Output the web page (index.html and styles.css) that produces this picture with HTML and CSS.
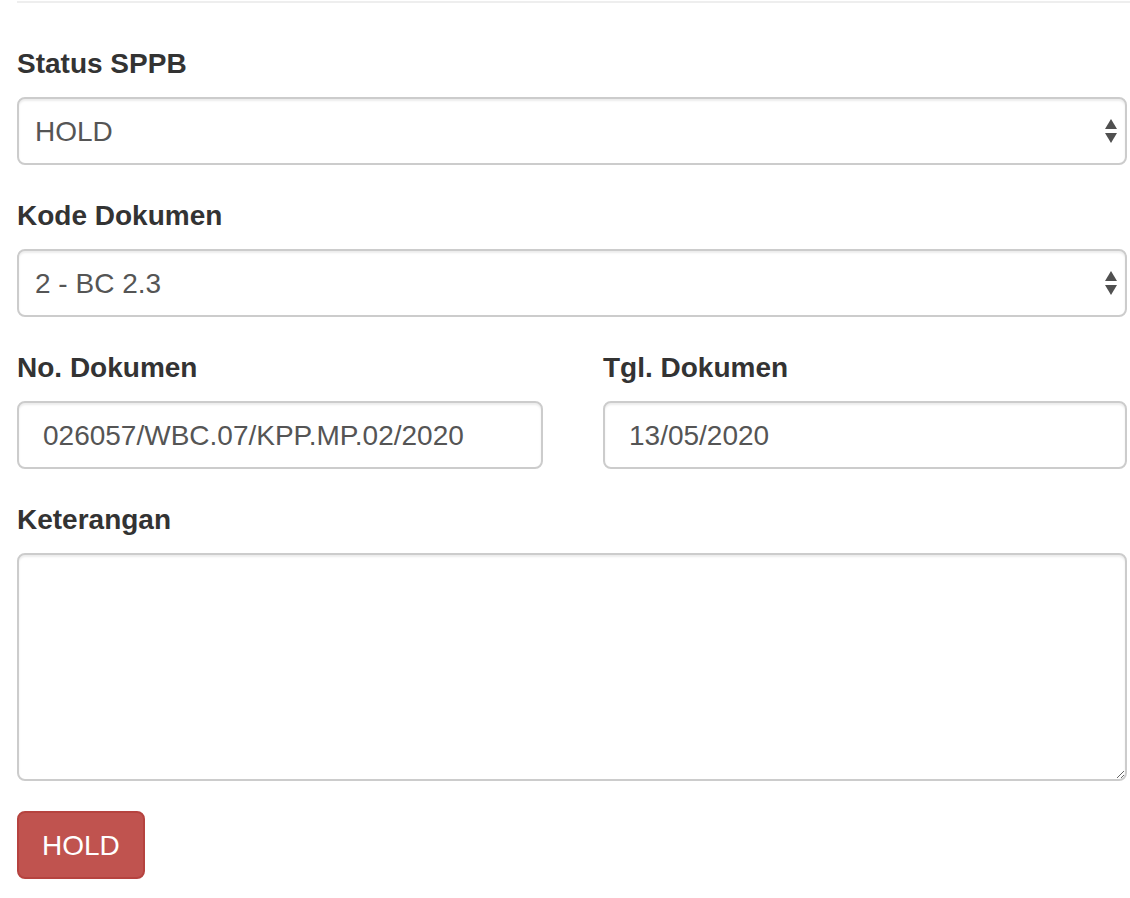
FILE: index.html
```html
<!DOCTYPE html>
<html lang="id">
<head>
<meta charset="utf-8">
<title>Status SPPB</title>
<link rel="stylesheet" href="styles.css">
</head>
<body>
<div class="page">
  <hr class="divider">
  <form class="form">
    <div class="form-group">
      <label class="label" for="status">Status SPPB</label>
      <div class="select-wrap">
        <select id="status" class="control select">
          <option>HOLD</option>
        </select>
        <svg class="select-arrows" width="12" height="24" viewBox="0 0 12 24" aria-hidden="true">
          <polygon points="6,0 12,10 0,10" fill="#505050"/>
          <polygon points="0,14 12,14 6,24" fill="#505050"/>
        </svg>
      </div>
    </div>
    <div class="form-group">
      <label class="label" for="kode">Kode Dokumen</label>
      <div class="select-wrap">
        <select id="kode" class="control select">
          <option>2 - BC 2.3</option>
        </select>
        <svg class="select-arrows" width="12" height="24" viewBox="0 0 12 24" aria-hidden="true">
          <polygon points="6,0 12,10 0,10" fill="#505050"/>
          <polygon points="0,14 12,14 6,24" fill="#505050"/>
        </svg>
      </div>
    </div>
    <div class="row">
      <div class="form-group">
        <label class="label" for="nodok">No. Dokumen</label>
        <input id="nodok" class="control input" type="text" value="026057/WBC.07/KPP.MP.02/2020">
      </div>
      <div class="form-group">
        <label class="label" for="tgl">Tgl. Dokumen</label>
        <input id="tgl" class="control input" type="text" value="13/05/2020">
      </div>
    </div>
    <div class="form-group">
      <label class="label" for="ket">Keterangan</label>
      <textarea id="ket" class="control textarea"></textarea>
    </div>
    <button type="button" class="btn-danger">HOLD</button>
  </form>
</div>
</body>
</html>
```

FILE: styles.css
```css
* {
  box-sizing: border-box;
}

html, body {
  margin: 0;
  padding: 0;
  background: #fff;
}

body {
  font-family: "Liberation Sans", Arial, Helvetica, sans-serif;
  color: #333;
  overflow: hidden;
}

.page {
  padding-left: 17px;
}

.divider {
  margin: 1px 0 40px 0;
  border: 0;
  border-top: 2px solid #eeeeee;
  height: 0;
}

.form {
  width: 1110px;
}

.form-group {
  margin-bottom: 30px;
}

.label {
  display: block;
  font-size: 28px;
  font-weight: bold;
  line-height: 42px;
  margin-bottom: 12px;
  color: #333;
}

.control {
  display: block;
  width: 100%;
  height: 68px;
  border: 2px solid #cccccc;
  border-radius: 8px;
  background: #fff;
  color: #555;
  font-family: "Liberation Sans", Arial, Helvetica, sans-serif;
  font-size: 28px;
  line-height: 40px;
  box-shadow: inset 0 2px 2px rgba(0, 0, 0, 0.075);
  outline: none;
  margin: 0;
}

.select-wrap {
  position: relative;
}

.select {
  -webkit-appearance: none;
  appearance: none;
  padding: 2px 40px 0 16px;
}

.select-arrows {
  position: absolute;
  right: 10px;
  top: 22px;
  pointer-events: none;
}

.input {
  padding: 2px 24px 0 24px;
}

.row {
  display: grid;
  grid-template-columns: 526px 1fr;
  column-gap: 60px;
}

.textarea {
  height: 228px;
  padding: 12px 24px;
  resize: both;
}

.btn-danger {
  display: inline-block;
  height: 68px;
  padding: 2px 23px 0 23px;
  margin-top: 0;
  background: #c0534f;
  border: 2px solid #b6433f;
  border-radius: 8px;
  color: #fff;
  font-family: "Liberation Sans", Arial, Helvetica, sans-serif;
  font-size: 28px;
  line-height: 40px;
  cursor: pointer;
}
```
